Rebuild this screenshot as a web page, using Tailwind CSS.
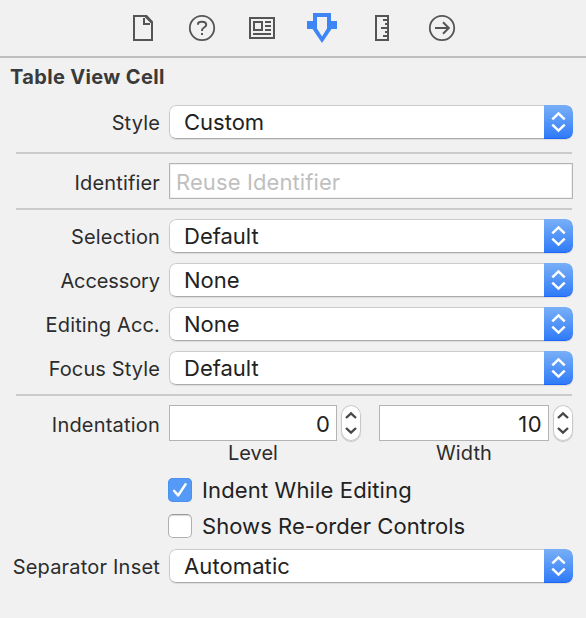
<!DOCTYPE html>
<html lang="en">
<head>
<meta charset="utf-8">
<title>Attributes Inspector</title>
<script src="https://cdn.jsdelivr.net/npm/@tailwindcss/browser@4"></script>
</head>
<body class="bg-[#f1f1f1]">
<svg width="0" height="0" class="absolute">
  <defs>
    <symbol id="updown" viewBox="0 0 29 34"><path d="M8.3 14.4 L14.5 8.4 L20.7 14.4 M8.3 19.6 L14.5 25.6 L20.7 19.6" fill="none" stroke="#fff" stroke-width="2.5"/></symbol>
    <symbol id="step" viewBox="0 0 20 36"><path d="M5 13 L10 8.3 L15 13 M5 23 L10 27.7 L15 23" fill="none" stroke="#484848" stroke-width="2.4"/></symbol>
  </defs>
</svg>
<main class="w-[586px] h-[618px] overflow-hidden bg-[#f1f1f1] font-['Inter','Liberation_Sans',sans-serif] text-[20px] text-[#2c2c2c]">
  <nav class="h-[58px] border-b-2 border-[#bfbfbf] flex pl-[113px]">
    <svg class="w-[60px] h-[56px]" viewBox="0 0 60 56" fill="none" stroke="#555" stroke-width="2"><path d="M21 16H33.5L39 22V40H21Z"/><path d="M31 18V24H37" /><path d="M32.5 16.5L38.5 22.5"/></svg>
    <svg class="w-[60px] h-[56px]" viewBox="0 0 60 56" fill="none" stroke="#555" stroke-width="2"><circle cx="29" cy="28" r="12.2" stroke-width="1.8"/><path d="M25 24.8V24C25 22.4 26.6 21.8 29 21.8C31.8 21.8 33.2 22.8 33.2 24.8C33.2 27.8 29 27.2 29 30.2V31"/><path d="M28 33H30V35H28Z" fill="#555" stroke="none"/></svg>
    <svg class="w-[60px] h-[56px]" viewBox="0 0 60 56" fill="none" stroke="#555" stroke-width="2"><path d="M17 18H41V38H17Z"/><path d="M21 22H29V30H21Z M32 22H38 M32 26H38 M32 30H38 M20 34H38"/></svg>
    <svg class="w-[60px] h-[56px]" viewBox="0 0 60 56"><path fill="#3e86f6" fill-rule="evenodd" d="M20 13H38V21H44V29H38.5L29 43L19.5 29H14V21H20Z M24 17V28.4L29 36.6L34 28.4V17Z"/></svg>
    <svg class="w-[60px] h-[56px]" viewBox="0 0 60 56" fill="none" stroke="#555" stroke-width="2"><path d="M23 16H35V40H23Z M30 20H35 M32 24H35 M28 28H35 M32 32H35 M30 36H35"/></svg>
    <svg class="w-[60px] h-[56px]" viewBox="0 0 60 56" fill="none" stroke="#555" stroke-width="2"><circle cx="29" cy="28" r="12.2" stroke-width="1.8"/><path d="M22 28H35.5 M30 22.2L35.8 28L30 33.8"/></svg>
  </nav>

  <h1 class="h-[47px] pl-[10px] pt-[7px] leading-[24px] font-bold tracking-[0.35px] text-[#3a3a3a]">Table View Cell</h1>

  <div class="flex h-[34px] gap-[9px] items-center">
    <label class="w-[160px] text-right whitespace-nowrap tracking-[0.15px] pt-[2px]">Style</label>
    <div class="w-[404px] h-[34px] flex rounded-[7px] overflow-hidden shadow-[0_1px_1px_#00000018] text-[22px] text-[#222]">
      <span class="flex-1 pl-[14px] leading-[33px] rounded-l-[7px] bg-white border border-r-0 border-[#cbcbcb] border-b-[#ababab]">Custom</span>
      <svg class="w-[29px] h-[34px] shrink-0 rounded-r-[7px] border-b border-[#1f66f8] bg-linear-to-b from-[#78aff5] to-[#2f7af8]" viewBox="0 0 29 33"><use href="#updown" width="29" height="34"/></svg>
    </div>
  </div>

  <hr class="mt-[13px] ml-[16px] w-[556px] border-t-2 border-[#cbcbcb]">

  <div class="mt-[9px] flex h-[36px] gap-[9px] items-center">
    <label class="w-[160px] text-right whitespace-nowrap tracking-[0.15px] pt-[3px]">Identifier</label>
    <div class="w-[404px] h-[36px] bg-white border border-[#b4b4b4] shadow-[inset_0_0_0_1px_#f0f0f0] pl-[6px] text-[22px] tracking-[0.1px] leading-[37px] text-[#bfbfbf]">Reuse Identifier</div>
  </div>

  <hr class="mt-[9px] ml-[16px] w-[556px] border-t-2 border-[#cbcbcb]">

  <section class="mt-[9px] flex flex-col gap-[10px]">
    <div class="flex h-[34px] gap-[9px] items-center">
      <label class="w-[160px] text-right whitespace-nowrap tracking-[0.15px] pt-[2px]">Selection</label>
      <div class="w-[404px] h-[34px] flex rounded-[7px] overflow-hidden shadow-[0_1px_1px_#00000018] text-[22px] text-[#222]">
        <span class="flex-1 pl-[14px] leading-[33px] rounded-l-[7px] bg-white border border-r-0 border-[#cbcbcb] border-b-[#ababab]">Default</span>
        <svg class="w-[29px] h-[34px] shrink-0 rounded-r-[7px] border-b border-[#1f66f8] bg-linear-to-b from-[#78aff5] to-[#2f7af8]" viewBox="0 0 29 33"><use href="#updown" width="29" height="34"/></svg>
      </div>
    </div>
    <div class="flex h-[34px] gap-[9px] items-center">
      <label class="w-[160px] text-right whitespace-nowrap tracking-[-0.1px] pt-[2px]">Accessory</label>
      <div class="w-[404px] h-[34px] flex rounded-[7px] overflow-hidden shadow-[0_1px_1px_#00000018] text-[22px] text-[#222]">
        <span class="flex-1 pl-[14px] leading-[33px] rounded-l-[7px] bg-white border border-r-0 border-[#cbcbcb] border-b-[#ababab]">None</span>
        <svg class="w-[29px] h-[34px] shrink-0 rounded-r-[7px] border-b border-[#1f66f8] bg-linear-to-b from-[#78aff5] to-[#2f7af8]" viewBox="0 0 29 33"><use href="#updown" width="29" height="34"/></svg>
      </div>
    </div>
    <div class="flex h-[34px] gap-[9px] items-center">
      <label class="w-[160px] text-right whitespace-nowrap tracking-[0.15px] pt-[2px]">Editing Acc.</label>
      <div class="w-[404px] h-[34px] flex rounded-[7px] overflow-hidden shadow-[0_1px_1px_#00000018] text-[22px] text-[#222]">
        <span class="flex-1 pl-[14px] leading-[33px] rounded-l-[7px] bg-white border border-r-0 border-[#cbcbcb] border-b-[#ababab]">None</span>
        <svg class="w-[29px] h-[34px] shrink-0 rounded-r-[7px] border-b border-[#1f66f8] bg-linear-to-b from-[#78aff5] to-[#2f7af8]" viewBox="0 0 29 33"><use href="#updown" width="29" height="34"/></svg>
      </div>
    </div>
    <div class="flex h-[34px] gap-[9px] items-center">
      <label class="w-[160px] text-right whitespace-nowrap tracking-[0.12px] pt-[2px]">Focus Style</label>
      <div class="w-[404px] h-[34px] flex rounded-[7px] overflow-hidden shadow-[0_1px_1px_#00000018] text-[22px] text-[#222]">
        <span class="flex-1 pl-[14px] leading-[33px] rounded-l-[7px] bg-white border border-r-0 border-[#cbcbcb] border-b-[#ababab]">Default</span>
        <svg class="w-[29px] h-[34px] shrink-0 rounded-r-[7px] border-b border-[#1f66f8] bg-linear-to-b from-[#78aff5] to-[#2f7af8]" viewBox="0 0 29 33"><use href="#updown" width="29" height="34"/></svg>
      </div>
    </div>
  </section>

  <hr class="mt-[9px] ml-[16px] w-[556px] border-t-2 border-[#cbcbcb]">

  <div class="mt-[9px] flex items-start h-[73px]">
    <label class="w-[160px] mr-[9px] text-right whitespace-nowrap tracking-[0.2px] leading-[40px]">Indentation</label>
    <div class="w-[168px]">
      <div class="h-[36px] bg-white border border-[#b4b4b4] pr-[6px] text-right text-[22px] leading-[37px] text-[#222]">0</div>
      <div class="text-center leading-[24px]">Level</div>
    </div>
    <svg class="ml-[4px] w-[20px] h-[36px] rounded-full bg-white shadow-[inset_0_0_0_1px_#c9c9c9,0_1px_1px_#00000030]" viewBox="0 0 20 36"><use href="#step"/></svg>
    <div class="ml-[18px] w-[170px]">
      <div class="h-[36px] bg-white border border-[#b4b4b4] pr-[6px] text-right text-[22px] leading-[37px] tracking-[0.4px] text-[#222]">10</div>
      <div class="text-center leading-[24px] tracking-[0.1px]">Width</div>
    </div>
    <svg class="ml-[4px] w-[20px] h-[36px] rounded-full bg-white shadow-[inset_0_0_0_1px_#c9c9c9,0_1px_1px_#00000030]" viewBox="0 0 20 36"><use href="#step"/></svg>
  </div>

  <div class="ml-[168px] flex flex-col gap-[12px] text-[22px] leading-[24px] text-[#222]">
    <div class="flex gap-[10px]">
      <svg class="size-[24px] rounded-[5px] bg-[#559af6] shadow-[inset_0_0_0_1px_#4b91f0]" viewBox="0 0 24 24"><path d="M6.2 13L10.2 17.4L17.5 6.4" fill="none" stroke="#fff" stroke-width="2.6" stroke-linecap="round" stroke-linejoin="round"/></svg>
      <span class="tracking-[0.14px]">Indent While Editing</span>
    </div>
    <div class="flex gap-[10px]">
      <div class="size-[24px] rounded-[5px] bg-white border border-[#b0b0b0] border-t-[#9a9a9a] shadow-[inset_0_1px_1px_#00000028]"></div>
      <span class="tracking-[0.06px]">Shows Re-order Controls</span>
    </div>
  </div>

  <div class="mt-[11px] flex h-[34px] gap-[9px] items-center">
    <label class="w-[160px] text-right whitespace-nowrap tracking-[0.2px] pt-[2px]">Separator Inset</label>
    <div class="w-[404px] h-[34px] flex rounded-[7px] overflow-hidden shadow-[0_1px_1px_#00000018] text-[22px] text-[#222]">
      <span class="flex-1 pl-[14px] leading-[33px] rounded-l-[7px] bg-white border border-r-0 border-[#cbcbcb] border-b-[#ababab] tracking-[0.1px]">Automatic</span>
      <svg class="w-[29px] h-[34px] shrink-0 rounded-r-[7px] border-b border-[#1f66f8] bg-linear-to-b from-[#78aff5] to-[#2f7af8]" viewBox="0 0 29 33"><use href="#updown" width="29" height="34"/></svg>
    </div>
  </div>
</main>
</body>
</html>
